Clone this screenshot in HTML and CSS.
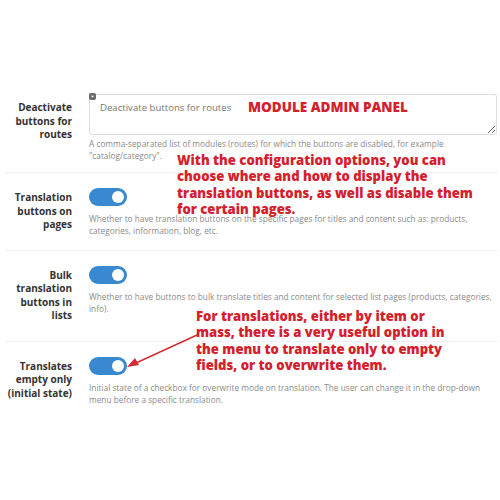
FILE: index.html
```html
<!DOCTYPE html>
<html>
<head>
<meta charset="utf-8">
<link rel="stylesheet" href="styles.css">
</head>
<body>
<div class="page">
  <div class="form">
    <div class="row first">
      <div class="label">Deactivate buttons for routes</div>
      <div class="control">
        <div class="area-wrap">
          <span class="area-icon"><svg width="7" height="7" viewBox="0 0 7 7"><path d="M1.8 2.8 L5.2 2.8 L3.5 4.6 Z" fill="#fff"/></svg></span>
          <textarea class="area" placeholder="Deactivate buttons for routes"></textarea>
        </div>
        <div class="help tight">A comma-separated list of modules (routes) for which the buttons are disabled, for example "catalog/category".</div>
      </div>
    </div>
    <div class="row">
      <div class="label">Translation buttons on pages</div>
      <div class="control">
        <span class="toggle"><span class="knob"></span></span>
        <div class="help">Whether to have translation buttons on the specific pages for titles and content such as: products, categories, information, blog, etc.</div>
      </div>
    </div>
    <div class="row">
      <div class="label">Bulk translation buttons in lists</div>
      <div class="control">
        <span class="toggle"><span class="knob"></span></span>
        <div class="help">Whether to have buttons to bulk translate titles and content for selected list pages (products, categories, info).</div>
      </div>
    </div>
    <div class="row">
      <div class="label">Translates empty only (initial state)</div>
      <div class="control">
        <span class="toggle"><span class="knob"></span></span>
        <div class="help">Initial state of a checkbox for overwrite mode on translation. The user can change it in the drop-down menu before a specific translation.</div>
      </div>
    </div>
  </div>

  <div class="note note-title">MODULE ADMIN PANEL</div>
  <div class="note note-1">With the configuration options, you can<br>choose where and how to display the<br>translation buttons, as well as disable them<br>for certain pages.</div>
  <div class="note note-2">For translations, either by item or<br>mass, there is a very useful option in<br>the menu to translate only to empty<br>fields, or to overwrite them.</div>
  <svg class="arrow" width="80" height="40" viewBox="0 0 80 40">
    <line x1="75" y1="2" x2="14" y2="30" stroke="#d42a32" stroke-width="1.4"/>
    <path d="M5 34 L13 25 L17 32 Z" fill="#d42a32"/>
  </svg>
</div>
</body>
</html>
```

FILE: styles.css
```css
html, body {
  margin: 0;
  padding: 0;
  background: #fff;
}
.page {
  position: relative;
  width: 500px;
  height: 500px;
  overflow: hidden;
  font-family: "Open Sans", "Liberation Sans", sans-serif;
}
.form {
  padding: 94px 3px 0 5px;
}
.row {
  display: grid;
  grid-template-columns: 67px 1fr;
  column-gap: 17px;
  padding: 15px 0 13px;
  border-top: 1px solid #efefef;
}
.row.first {
  border-top: none;
  padding-top: 0;
  padding-bottom: 11px;
}
.label {
  text-align: right;
  font-weight: 700;
  font-size: 10px;
  line-height: 13.5px;
  color: #333;
  padding-top: 3px;
  margin-bottom: 5px;
}
.row.first .label {
  padding-top: 7px;
}
.control {
  min-width: 0;
}
.area-wrap {
  position: relative;
}
.area-icon {
  position: absolute;
  left: 0;
  top: -1px;
  width: 7px;
  height: 7px;
  border-radius: 2px;
  background: #6b6b6b;
  display: flex;
}
.area {
  display: block;
  box-sizing: border-box;
  width: 100%;
  height: 41px;
  margin: 0;
  border: 1px solid #dcdcdc;
  border-radius: 3px;
  padding: 6px 10px;
  font-family: "Open Sans", "Liberation Sans", sans-serif;
  font-size: 9.6px;
  color: #555;
  resize: vertical;
  outline: none;
}
.area::placeholder {
  color: #777;
}
.toggle {
  display: block;
  position: relative;
  width: 38px;
  height: 18px;
  border-radius: 9px;
  background: #3889cf;
}
.knob {
  position: absolute;
  right: 3px;
  top: 3px;
  width: 12px;
  height: 12px;
  border-radius: 50%;
  background: #fff;
}
.help {
  margin-top: 7px;
  font-size: 8.3px;
  line-height: 11.7px;
  color: #8a8a8a;
}
.help.tight {
  margin-top: 3px;
}
.note {
  position: absolute;
  color: #d4202c;
  font-family: "Open Sans", "Liberation Sans", sans-serif;
  font-weight: 800;
  font-size: 13.1px;
  line-height: 16.3px;
  white-space: nowrap;
}
.note-title {
  left: 248px;
  top: 99px;
  font-size: 13.5px;
}
.note-1 {
  left: 177px;
  top: 152px;
}
.note-2 {
  left: 196px;
  top: 308px;
}
.arrow {
  position: absolute;
  left: 122px;
  top: 333px;
}
```
